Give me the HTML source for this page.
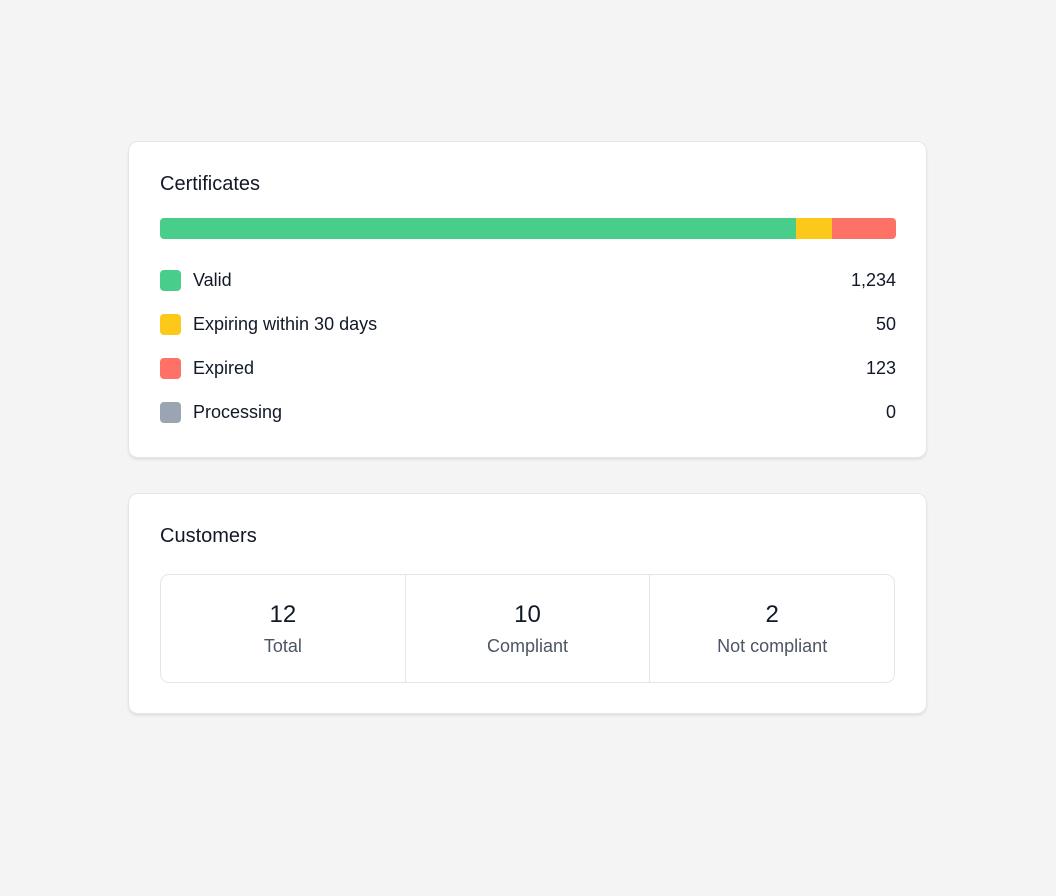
<!DOCTYPE html>
<html><head><style>
body{margin:0;width:1056px;height:896px;background:#f4f4f4;font-family:"Liberation Sans",sans-serif;color:#111827;position:relative}
.card{position:absolute;left:128px;width:797px;background:#fff;border:1px solid #e3e6eb;border-radius:10px;box-shadow:0 2px 2px rgba(0,0,0,0.08)}
.t{position:absolute;left:31px;font-size:20px}
.bar{position:absolute;left:31px;top:76px;width:736px;height:21px;border-radius:4px;overflow:hidden;display:flex}
.row{position:absolute;left:31px;width:736px;height:22px;font-size:18px;line-height:22px}
.sq{position:absolute;left:0;top:0;width:21px;height:21px;border-radius:4px}
.lab{position:absolute;left:33px}
.val{position:absolute;right:0}
.grid{position:absolute;left:31px;top:80px;width:733px;height:107px;border:1px solid #e3e6eb;border-radius:9px;display:flex}
.c{flex:1;text-align:center;border-left:1px solid #e3e6eb}
.c:first-child{border-left:none}
.n{font-size:24px;margin-top:26px;line-height:28px}
.l{font-size:18px;color:#4b5563;margin-top:6px;line-height:22px}
</style></head><body>
<div class="card" style="top:141px;height:315px">
<div class="t" style="top:31px">Certificates</div>
<div class="bar"><div style="width:636px;background:#48cd8a"></div><div style="width:36px;background:#fcc81a"></div><div style="flex:1;background:#fe7166"></div></div>
<div class="row" style="top:127px"><div class="sq" style="background:#48cd8a;top:1px"></div><span class="lab">Valid</span><span class="val">1,234</span></div>
<div class="row" style="top:171px"><div class="sq" style="background:#fcc81a;top:1px"></div><span class="lab">Expiring within 30 days</span><span class="val">50</span></div>
<div class="row" style="top:215px"><div class="sq" style="background:#fe7166;top:1px"></div><span class="lab">Expired</span><span class="val">123</span></div>
<div class="row" style="top:259px"><div class="sq" style="background:#9ba4b3;top:1px"></div><span class="lab">Processing</span><span class="val">0</span></div>
</div>
<div class="card" style="top:493px;height:219px">
<div class="t" style="top:31px">Customers</div>
<div class="grid">
<div class="c"><div class="n">12</div><div class="l">Total</div></div>
<div class="c"><div class="n">10</div><div class="l">Compliant</div></div>
<div class="c"><div class="n">2</div><div class="l">Not compliant</div></div>
</div>
</div>
</body></html>
